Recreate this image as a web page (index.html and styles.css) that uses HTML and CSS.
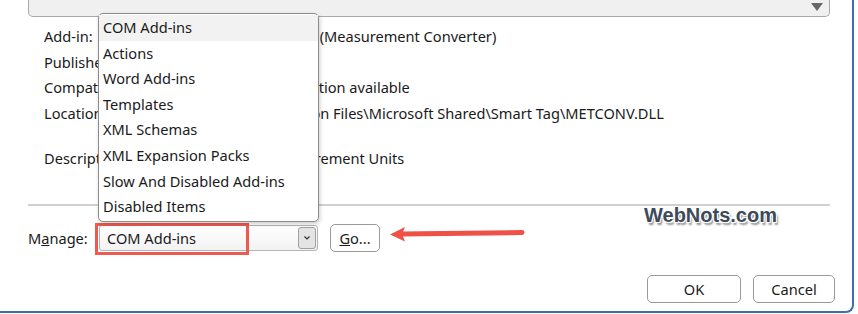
FILE: index.html
```html
<!DOCTYPE html>
<html lang="en">
<head>
  <meta charset="UTF-8">
  <title>COM Add-ins</title>
  <link rel="stylesheet" href="styles.css">
</head>
<body>
  <div class="dialog">
    <div class="listbox">
      <span class="list-arrow"></span>
    </div>

    <div class="details">
      <div class="row"><span class="label">Add-in:</span><span class="value">Measurement Converter (Measurement Converter)</span></div>
      <div class="row"><span class="label">Publisher:</span><span class="value"></span></div>
      <div class="row"><span class="label">Compatibility:</span><span class="value">No compatibility information available</span></div>
      <div class="row"><span class="label">Location:</span><span class="value">C:\Program Files\Common Files\Microsoft Shared\Smart Tag\METCONV.DLL</span></div>
      <div class="row desc"><span class="label">Description:</span><span class="value">Convert between Measurement Units</span></div>
    </div>

    <div class="separator"></div>

    <div class="manage">
      <span class="manage-label">M<u>a</u>nage:</span>
      <div class="combo">
        <span class="combo-text">COM Add-ins</span>
        <span class="combo-btn">
          <svg width="8" height="6" viewBox="0 0 8 6"><path d="M1.5 1.5 L4 4 L6.5 1.5" fill="none" stroke="#333" stroke-width="1.2"/></svg>
        </span>
        <span class="highlight"></span>
      </div>
      <button class="btn go"><u>G</u>o...</button>
    </div>

    <div class="footer">
      <button class="btn ok">OK</button>
      <button class="btn cancel">Cancel</button>
    </div>

    <ul class="popup">
      <li class="active">COM Add-ins</li>
      <li>Actions</li>
      <li>Word Add-ins</li>
      <li>Templates</li>
      <li>XML Schemas</li>
      <li>XML Expansion Packs</li>
      <li>Slow And Disabled Add-ins</li>
      <li>Disabled Items</li>
    </ul>

    <svg class="arrow" width="140" height="20" viewBox="0 0 140 20">
      <path d="M12 10 L133 8.5" stroke="#ef5048" stroke-width="5" stroke-linecap="round" fill="none"/>
      <path d="M1 10.5 L16 3 L13 10 L16 17.5 Z" fill="#ef5048"/>
    </svg>

    <div class="watermark">WebNots.com</div>
  </div>
</body>
</html>
```

FILE: styles.css
```css
body {
  margin: 0;
  background: #fff;
  font-family: "Noto Sans", "Open Sans", sans-serif;
  font-size: 14.6px;
  color: #1a1a1a;
  overflow: hidden;
}
.dialog {
  position: relative;
  width: 852px;
  height: 311px;
  background: #fff;
  border-right: 2px solid #3d6fb0;
  border-bottom: 2px solid #3d6fb0;
  border-bottom-right-radius: 8px;
}
.listbox {
  position: relative;
  margin-left: 28px;
  width: 800px;
  height: 16px;
  background: #f0f0f0;
  border: 1px solid #a8a8a8;
  border-top: none;
  border-radius: 0 0 5px 5px;
}
.list-arrow {
  position: absolute;
  right: 6px;
  top: 3px;
  border-left: 6px solid transparent;
  border-right: 6px solid transparent;
  border-top: 8px solid #666;
}
.details {
  margin-top: 7px;
  margin-left: 44px;
}
.row {
  display: flex;
  height: 25.5px;
  line-height: 25.5px;
  white-space: nowrap;
}
.row.desc {
  margin-top: 20px;
}
.label {
  width: 104px;
}
.value {
  flex: 1;
}
.separator {
  margin: 32px 0 0 28px;
  width: 802px;
  height: 2px;
  background: #d0d0d0;
}
.manage {
  display: flex;
  align-items: center;
  margin-top: 18px;
  margin-left: 28px;
}
.manage-label {
  width: 71px;
}
.combo {
  position: relative;
  display: flex;
  width: 219px;
  height: 26px;
  box-sizing: border-box;
  border: 1px solid #b5b5b5;
  border-radius: 3px;
  background: linear-gradient(#fff, #f2f2f2);
}
.combo-text {
  flex: 1;
  padding-left: 7px;
  line-height: 24px;
}
.combo-btn {
  display: flex;
  align-items: center;
  justify-content: center;
  width: 16px;
  margin: 1px;
  border: 1px solid #a0a0a0;
  border-radius: 3px;
  background: #e4e4e4;
}
.highlight {
  position: absolute;
  left: -5px;
  top: -3px;
  width: 148px;
  height: 26px;
  border: 3px solid #ec5a50;
}
.btn {
  font-family: inherit;
  font-size: 14.6px;
  color: #1a1a1a;
  background: #fff;
  border: 1px solid #9a9a9a;
  border-radius: 5px;
  padding: 0;
  height: 28px;
}
.go {
  width: 50px;
  margin-left: 12px;
}
.footer {
  display: flex;
  justify-content: flex-end;
  gap: 12px;
  margin-top: 23px;
  padding-right: 17px;
}
.ok {
  width: 94px;
}
.cancel {
  width: 82px;
}
.popup {
  position: absolute;
  left: 98px;
  top: 13px;
  width: 219px;
  margin: 0;
  padding: 1px 0;
  list-style: none;
  background: #fff;
  border: 1px solid #8c8c8c;
  border-radius: 5px;
  box-shadow: 1px 2px 4px rgba(0,0,0,0.2);
}
.popup li {
  height: 25.6px;
  line-height: 25.6px;
  padding-left: 4px;
}
.popup li.active {
  background: #f2f2f2;
}
.arrow {
  position: absolute;
  left: 389px;
  top: 224px;
}
.watermark {
  position: absolute;
  left: 644px;
  top: 204px;
  font-family: "Liberation Sans", Arial, sans-serif;
  font-weight: bold;
  font-size: 20px;
  color: #3d4a5a;
  text-shadow: -1px -1px 0 #fff, 1px -1px 0 #fff, -1px 1px 0 #fff, 1px 1px 0 #fff, 2px 3px 2px rgba(0,0,0,0.45);
}
```
